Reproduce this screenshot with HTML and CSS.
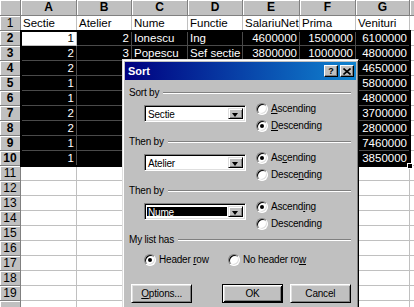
FILE: index.html
```html
<!DOCTYPE html>
<html lang="ro">
<head>
    <meta charset="UTF-8">
    <meta name="viewport" content="width=device-width, initial-scale=1.0">
    <title>Sort</title>
    <link rel="stylesheet" href="styles.css">
</head>
<body>
    <div class="sheet">
        <!-- column headers -->
        <div class="ch corner"></div>
        <div class="ch">A</div><div class="ch">B</div><div class="ch">C</div><div class="ch">D</div>
        <div class="ch">E</div><div class="ch">F</div><div class="ch">G</div><div class="ch"></div>

        <div class="rh">1</div>
        <div class="c">Sectie</div><div class="c">Atelier</div><div class="c">Nume</div><div class="c">Functie</div>
        <div class="c">SalariuNet</div><div class="c">Prima</div><div class="c">Venituri</div><div class="c"></div>

        <div class="rh on">2</div>
        <div class="c n act">1</div><div class="c n sel">2</div><div class="c sel">Ionescu</div><div class="c sel">Ing</div>
        <div class="c n sel">4600000</div><div class="c n sel">1500000</div><div class="c n sel">6100000</div><div class="c"></div>

        <div class="rh on">3</div>
        <div class="c n sel">2</div><div class="c n sel">3</div><div class="c sel">Popescu</div><div class="c sel">Sef sectie</div>
        <div class="c n sel">3800000</div><div class="c n sel">1000000</div><div class="c n sel">4800000</div><div class="c"></div>

        <!-- rows 4-10: columns B..F sit under the dialog -->
        <div class="rh on">4</div>
        <div class="c n sel">2</div><div class="c sel"></div><div class="c sel"></div><div class="c sel"></div>
        <div class="c sel"></div><div class="c sel"></div><div class="c n sel">4650000</div><div class="c"></div>

        <div class="rh on">5</div>
        <div class="c n sel">1</div><div class="c sel"></div><div class="c sel"></div><div class="c sel"></div>
        <div class="c sel"></div><div class="c sel"></div><div class="c n sel">5800000</div><div class="c"></div>

        <div class="rh on">6</div>
        <div class="c n sel">1</div><div class="c sel"></div><div class="c sel"></div><div class="c sel"></div>
        <div class="c sel"></div><div class="c sel"></div><div class="c n sel">4800000</div><div class="c"></div>

        <div class="rh on">7</div>
        <div class="c n sel">2</div><div class="c sel"></div><div class="c sel"></div><div class="c sel"></div>
        <div class="c sel"></div><div class="c sel"></div><div class="c n sel">3700000</div><div class="c"></div>

        <div class="rh on">8</div>
        <div class="c n sel">2</div><div class="c sel"></div><div class="c sel"></div><div class="c sel"></div>
        <div class="c sel"></div><div class="c sel"></div><div class="c n sel">2800000</div><div class="c"></div>

        <div class="rh on">9</div>
        <div class="c n sel">1</div><div class="c sel"></div><div class="c sel"></div><div class="c sel"></div>
        <div class="c sel"></div><div class="c sel"></div><div class="c n sel">7460000</div><div class="c"></div>

        <div class="rh on">10</div>
        <div class="c n sel">1</div><div class="c sel"></div><div class="c sel"></div><div class="c sel"></div>
        <div class="c sel"></div><div class="c sel"></div><div class="c n sel">3850000</div><div class="c"></div>

        <div class="rh">11</div>
        <div class="c"></div><div class="c"></div><div class="c"></div><div class="c"></div><div class="c"></div><div class="c"></div><div class="c"></div><div class="c"></div>
        <div class="rh">12</div>
        <div class="c"></div><div class="c"></div><div class="c"></div><div class="c"></div><div class="c"></div><div class="c"></div><div class="c"></div><div class="c"></div>
        <div class="rh">13</div>
        <div class="c"></div><div class="c"></div><div class="c"></div><div class="c"></div><div class="c"></div><div class="c"></div><div class="c"></div><div class="c"></div>
        <div class="rh">14</div>
        <div class="c"></div><div class="c"></div><div class="c"></div><div class="c"></div><div class="c"></div><div class="c"></div><div class="c"></div><div class="c"></div>
        <div class="rh">15</div>
        <div class="c"></div><div class="c"></div><div class="c"></div><div class="c"></div><div class="c"></div><div class="c"></div><div class="c"></div><div class="c"></div>
        <div class="rh">16</div>
        <div class="c"></div><div class="c"></div><div class="c"></div><div class="c"></div><div class="c"></div><div class="c"></div><div class="c"></div><div class="c"></div>
        <div class="rh">17</div>
        <div class="c"></div><div class="c"></div><div class="c"></div><div class="c"></div><div class="c"></div><div class="c"></div><div class="c"></div><div class="c"></div>
        <div class="rh">18</div>
        <div class="c"></div><div class="c"></div><div class="c"></div><div class="c"></div><div class="c"></div><div class="c"></div><div class="c"></div><div class="c"></div>
        <div class="rh">19</div>
        <div class="c"></div><div class="c"></div><div class="c"></div><div class="c"></div><div class="c"></div><div class="c"></div><div class="c"></div><div class="c"></div>
        <div class="rh"></div>
        <div class="c"></div><div class="c"></div><div class="c"></div><div class="c"></div><div class="c"></div><div class="c"></div><div class="c"></div><div class="c"></div>
    </div>

    <div class="sel-frame"></div>
    <div class="fill-handle"></div>

    <div class="dialog">
        <div class="titlebar">
            <span class="title">Sort</span>
            <span class="cbtn help">?</span>
            <span class="cbtn close">
                <svg width="8" height="7" viewBox="0 0 8 7"><path d="M0.5 0.5 L7.5 6.5 M7.5 0.5 L0.5 6.5" stroke="#000" stroke-width="1.6"/></svg>
            </span>
        </div>
        <div class="dlg-body">
            <div class="group">
                <div class="group-head"><span>Sort by</span><span class="line"></span></div>
                <div class="group-row">
                    <div class="combo"><span class="combo-text">Sectie</span><span class="combo-btn"></span></div>
                    <div class="radios">
                        <div class="opt"><span class="radio"></span><span><u>A</u>scending</span></div>
                        <div class="opt"><span class="radio on"></span><span><u>D</u>escending</span></div>
                    </div>
                </div>
            </div>
            <div class="group">
                <div class="group-head"><span>Then by</span><span class="line"></span></div>
                <div class="group-row">
                    <div class="combo"><span class="combo-text">Atelier</span><span class="combo-btn"></span></div>
                    <div class="radios">
                        <div class="opt"><span class="radio on"></span><span>As<u>c</u>ending</span></div>
                        <div class="opt"><span class="radio"></span><span>Desce<u>n</u>ding</span></div>
                    </div>
                </div>
            </div>
            <div class="group">
                <div class="group-head"><span>Then by</span><span class="line"></span></div>
                <div class="group-row">
                    <div class="combo"><span class="combo-text focus">Nume</span><span class="combo-btn"></span></div>
                    <div class="radios">
                        <div class="opt"><span class="radio on"></span><span>Ascend<u>i</u>ng</span></div>
                        <div class="opt"><span class="radio"></span><span>Descendin<u>g</u></span></div>
                    </div>
                </div>
            </div>
            <div class="group-head"><span>My list has</span><span class="line"></span></div>
            <div class="list-row">
                <div class="opt first"><span class="radio on"></span><span>Header <u>r</u>ow</span></div>
                <div class="opt"><span class="radio"></span><span>No header ro<u>w</u></span></div>
            </div>
            <div class="buttons">
                <div class="btn options"><span><u>O</u>ptions...</span></div>
                <div class="btn default ok">OK</div>
                <div class="btn cancel">Cancel</div>
            </div>
        </div>
    </div>
</body>
</html>
```

FILE: styles.css
```css
* {
    box-sizing: border-box;
}
body {
    margin: 0;
    width: 414px;
    height: 307px;
    overflow: hidden;
    position: relative;
    background: #fff;
    font-family: "Liberation Sans", Arial, sans-serif;
}

/* spreadsheet */
.sheet {
    display: grid;
    grid-template-columns: 21px 56px 55px 56px 55px 57px 56px 54px 1fr;
    grid-template-rows: 16px;
    grid-auto-rows: 15px;
    font-size: 11.5px;
    color: #000;
}
.ch, .rh {
    background: #c0c0c0;
    border-right: 1px solid #808080;
    border-bottom: 1px solid #808080;
    box-shadow: inset 1px 1px 0 #fff;
    text-align: center;
    font-size: 12px;
}
.ch {
    font-weight: bold;
    line-height: 15px;
}
.rh {
    line-height: 14px;
}
.rh.on {
    font-weight: bold;
}
.c {
    border-right: 1px solid #c0c0c0;
    border-bottom: 1px solid #c0c0c0;
    line-height: 14px;
    padding: 0 2px;
    white-space: nowrap;
    overflow: hidden;
}
.n {
    text-align: right;
}
.sel {
    background: #000;
    color: #fff;
    border-color: #4a4a4a;
}
.sel-frame {
    position: absolute;
    left: 20px;
    top: 30px;
    width: 391px;
    height: 137px;
    border: 2px solid #000;
}
.fill-handle {
    position: absolute;
    left: 407px;
    top: 163px;
    width: 6px;
    height: 6px;
    background: #000;
    border: 1px solid #fff;
}

/* dialog */
.dialog {
    position: absolute;
    left: 122px;
    top: 59px;
    width: 237px;
    height: 262px;
    background: #c0c0c0;
    border: 1px solid;
    border-color: #dfdfdf #000 #000 #dfdfdf;
    box-shadow: inset 1px 1px 0 #fff, inset -1px -1px 0 #808080;
    padding: 2px;
    font-size: 10px;
    line-height: 12px;
    letter-spacing: -0.2px;
}
.titlebar {
    height: 18px;
    display: flex;
    align-items: center;
    gap: 2px;
    padding: 0 2px 0 3px;
    background: linear-gradient(90deg, #000080, #1084d0);
}
.title {
    color: #fff;
    font-weight: bold;
    font-size: 11px;
    line-height: 13px;
    letter-spacing: 0;
    margin-right: auto;
}
.cbtn {
    width: 14px;
    height: 12px;
    display: flex;
    align-items: center;
    justify-content: center;
    background: #c0c0c0;
    border: 1px solid;
    border-color: #fff #000 #000 #fff;
    box-shadow: inset -1px -1px 0 #808080;
    font-weight: bold;
    font-size: 9px;
    line-height: 10px;
    letter-spacing: 0;
}
.dlg-body {
    padding: 7px 5px 0 4px;
}
.group-head {
    height: 12px;
    display: flex;
    align-items: center;
    white-space: nowrap;
}
.line {
    flex: 1;
    height: 2px;
    margin-left: 4px;
    border-top: 1px solid #808080;
    border-bottom: 1px solid #fff;
}
.group-row {
    display: flex;
    height: 33px;
    margin: 2px 0;
    padding-left: 15px;
}
.combo {
    width: 102px;
    height: 17px;
    margin-top: 4px;
    display: flex;
    padding: 2px;
    background: #fff;
    border: 1px solid;
    border-color: #808080 #fff #fff #808080;
    box-shadow: inset 1px 1px 0 #000, inset -1px -1px 0 #dfdfdf;
}
.combo-text {
    flex: 1;
    margin: 1px 1px 1px 0;
    padding-left: 1px;
    line-height: 11px;
}
.combo-text.focus {
    background: #000;
    color: #fff;
}
.combo-btn {
    width: 15px;
    position: relative;
    background: #c0c0c0;
    border: 1px solid;
    border-color: #dfdfdf #000 #000 #dfdfdf;
    box-shadow: inset 1px 1px 0 #fff, inset -1px -1px 0 #808080;
}
.combo-btn::after {
    content: "";
    position: absolute;
    left: 3px;
    top: 4px;
    border-left: 3.5px solid transparent;
    border-right: 3.5px solid transparent;
    border-top: 4px solid #000;
}
.radios {
    margin-left: 10px;
    display: flex;
    flex-direction: column;
    gap: 1px;
}
.opt {
    height: 16px;
    display: flex;
    align-items: center;
    gap: 3px;
    white-space: nowrap;
}
.radio {
    width: 12px;
    height: 12px;
    position: relative;
    border-radius: 50%;
    background: #fff;
    border: 1px solid;
    border-color: #808080 #fff #fff #808080;
    box-shadow: inset 1px 1px 0 #000, inset -1px -1px 0 #dfdfdf;
}
.radio.on::after {
    content: "";
    position: absolute;
    left: 3px;
    top: 3px;
    width: 4px;
    height: 4px;
    border-radius: 50%;
    background: #000;
}
.list-row {
    display: flex;
    margin-top: 6px;
    padding-left: 15px;
}
.opt.first {
    width: 84px;
}
.buttons {
    display: flex;
    margin-top: 16px;
    padding-left: 2px;
}
.btn {
    width: 62px;
    height: 19px;
    display: flex;
    align-items: center;
    justify-content: center;
    background: #c0c0c0;
    border: 1px solid;
    border-color: #fff #000 #000 #fff;
    box-shadow: inset 1px 1px 0 #dfdfdf, inset -1px -1px 0 #808080;
}
.btn.default {
    border-color: #000;
    box-shadow: inset 1px 1px 0 #fff, inset -1px -1px 0 #000, inset 2px 2px 0 #dfdfdf, inset -2px -2px 0 #808080;
}
.ok {
    width: 61px;
    margin-left: 30px;
}
.cancel {
    margin-left: 7px;
}
```
